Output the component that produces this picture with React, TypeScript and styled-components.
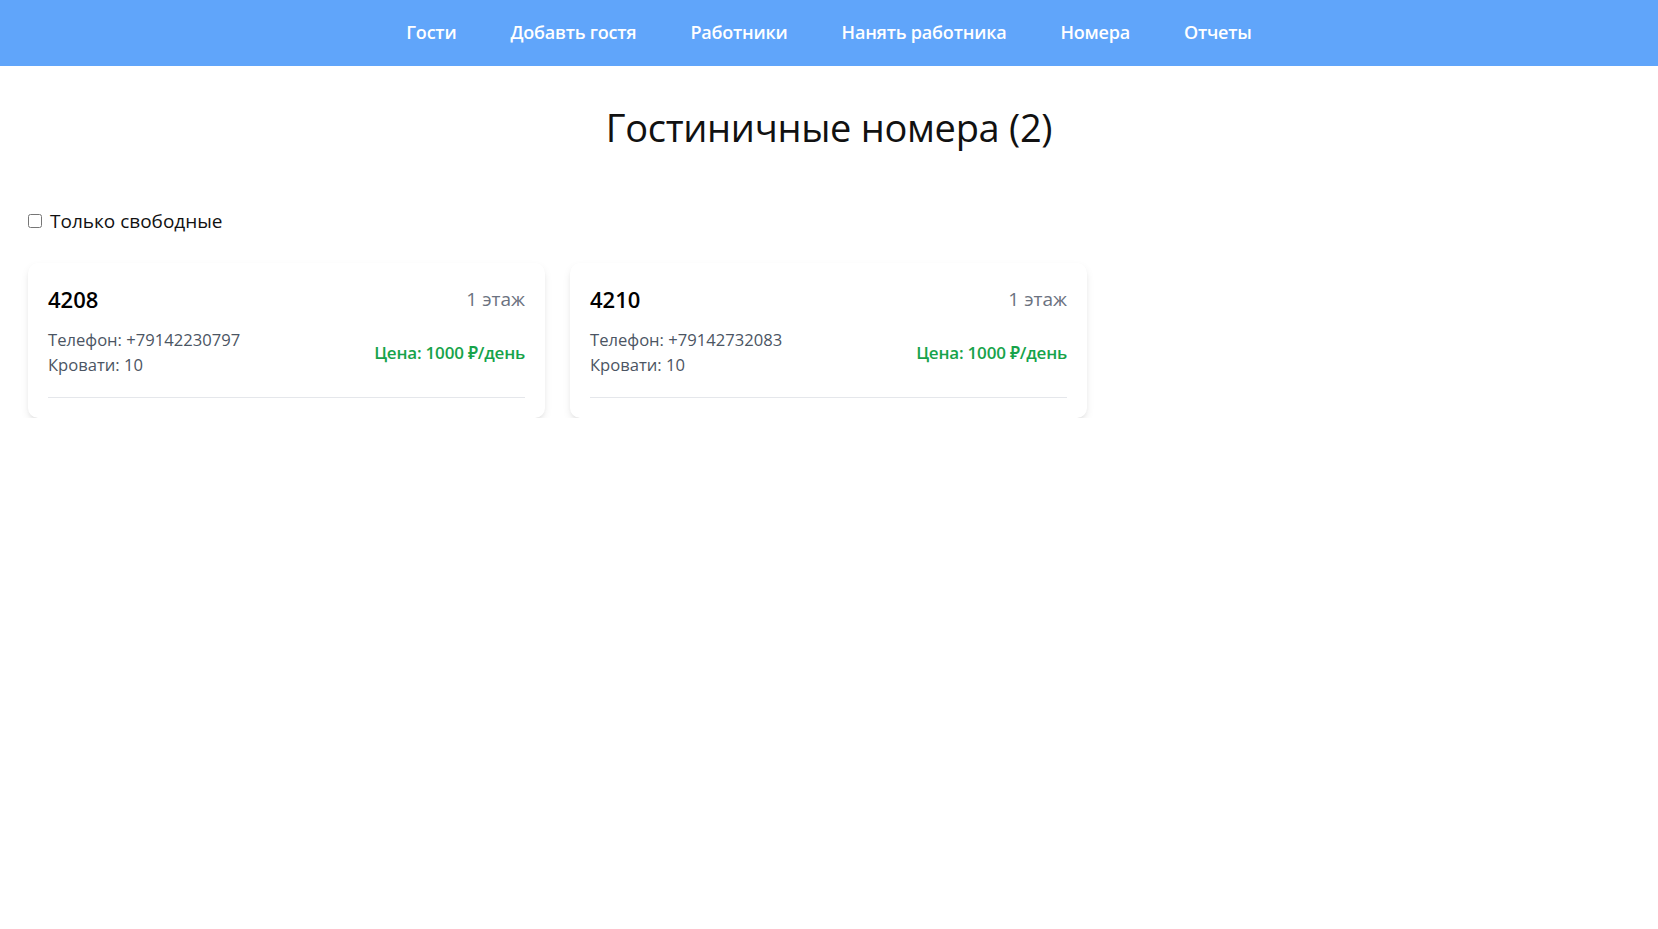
import React, { useState } from 'react';
import styled, { createGlobalStyle } from 'styled-components';

const GlobalStyle = createGlobalStyle`
  html, body {
    margin: 0;
    padding: 0;
    background: #ffffff;
    font-family: "Open Sans", "Noto Sans", "Liberation Sans", sans-serif;
    color: #111827;
  }
  * {
    box-sizing: border-box;
  }
`;

const NavBar = styled.nav`
  height: 66px;
  background-color: #60a5fa;
  display: flex;
  justify-content: center;
  align-items: center;
  gap: 54px;
  padding-bottom: 2px;
`;

const NavLink = styled.a`
  color: #ffffff;
  font-size: 18px;
  font-weight: 600;
  text-decoration: none;
  cursor: pointer;
  letter-spacing: -0.2px;
`;

const Main = styled.main`
  padding: 0 28px;
`;

const Title = styled.h1`
  margin: 0;
  padding-top: 36px;
  text-align: center;
  font-size: 38px;
  font-weight: 400;
  line-height: 50px;
  color: #111111;
  letter-spacing: -0.3px;
`;

const FilterRow = styled.label`
  display: flex;
  align-items: center;
  margin-top: 56px;
  font-size: 19px;
  line-height: 26px;
  color: #111111;
  cursor: pointer;
  width: fit-content;
`;

const Checkbox = styled.input`
  width: 14px;
  height: 14px;
  margin: 0 8px 0 0;
`;

const Grid = styled.div`
  display: grid;
  grid-template-columns: repeat(3, 517px);
  gap: 25px;
  margin-top: 29px;
`;

const Card = styled.div`
  background: #ffffff;
  border-radius: 10px;
  box-shadow: 0 4px 10px -2px rgba(0, 0, 0, 0.13), 0 2px 4px -2px rgba(0, 0, 0, 0.08);
  padding: 21px 20px 20px;
`;

const CardHeader = styled.div`
  display: flex;
  justify-content: space-between;
  align-items: center;
  height: 30px;
`;

const RoomNumber = styled.span`
  font-size: 22px;
  font-weight: 600;
  color: #000000;
`;

const Floor = styled.span`
  font-size: 19px;
  color: #6b7280;
`;

const CardBody = styled.div`
  display: flex;
  justify-content: space-between;
  align-items: center;
  margin-top: 13px;
  padding-bottom: 20px;
  border-bottom: 1px solid #e5e7eb;
`;

const Details = styled.div`
  display: flex;
  flex-direction: column;
  font-size: 16.6px;
  line-height: 25px;
  color: #4b5563;
`;

const Price = styled.span`
  font-size: 17px;
  font-weight: 600;
  color: #16a34a;
  letter-spacing: -0.2px;
`;

type Room = {
  number: string;
  floor: number;
  phone: string;
  beds: number;
  price: number;
};

const rooms: Room[] = [
  { number: '4208', floor: 1, phone: '+79142230797', beds: 10, price: 1000 },
  { number: '4210', floor: 1, phone: '+79142732083', beds: 10, price: 1000 },
];

const links = ['Гости', 'Добавть гостя', 'Работники', 'Нанять работника', 'Номера', 'Отчеты'];

const App: React.FC = () => {
  const [onlyFree, setOnlyFree] = useState(false);

  return (
    <>
      <GlobalStyle />
      <NavBar>
        {links.map(l => (
          <NavLink key={l}>{l}</NavLink>
        ))}
      </NavBar>
      <Main>
        <Title>Гостиничные номера ({rooms.length})</Title>
        <FilterRow>
          <Checkbox type="checkbox" checked={onlyFree} onChange={e => setOnlyFree(e.target.checked)} />
          Только свободные
        </FilterRow>
        <Grid>
          {rooms.map(r => (
            <Card key={r.number}>
              <CardHeader>
                <RoomNumber>{r.number}</RoomNumber>
                <Floor>{r.floor} этаж</Floor>
              </CardHeader>
              <CardBody>
                <Details>
                  <span>Телефон: {r.phone}</span>
                  <span>Кровати: {r.beds}</span>
                </Details>
                <Price>Цена: {r.price} ₽/день</Price>
              </CardBody>
            </Card>
          ))}
        </Grid>
      </Main>
    </>
  );
};

export default App;
